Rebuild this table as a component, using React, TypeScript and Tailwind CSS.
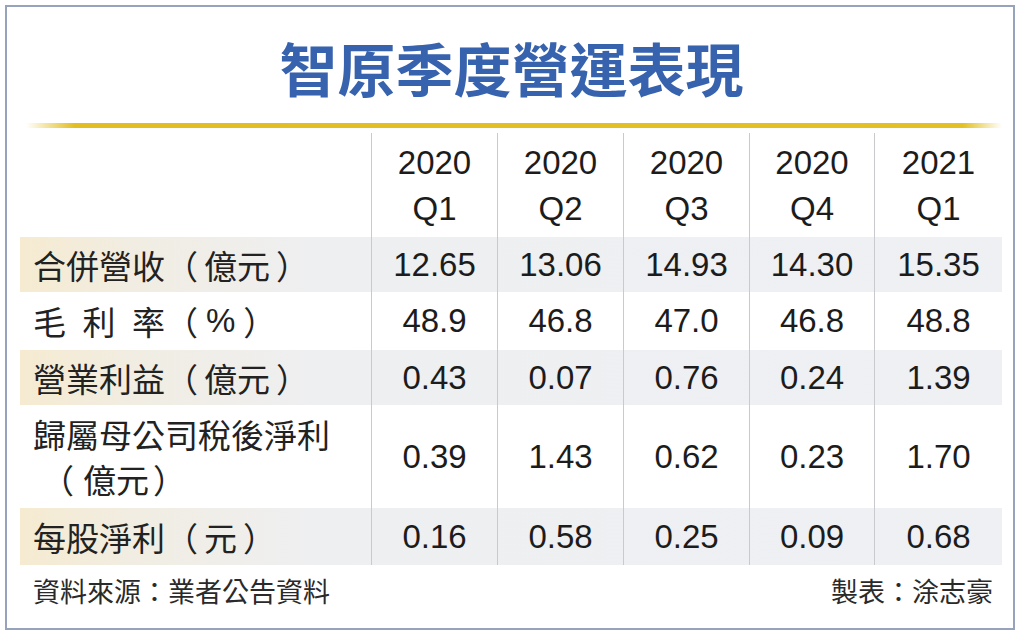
const FONT = "font-['Liberation_Sans','Noto_Sans_CJK_TC',sans-serif]";
const CJK = "font-['Noto_Sans_CJK_TC',sans-serif]";

const quarters = [
  { year: '2020', q: 'Q1' },
  { year: '2020', q: 'Q2' },
  { year: '2020', q: 'Q3' },
  { year: '2020', q: 'Q4' },
  { year: '2021', q: 'Q1' },
];

const rows = [
  { label: '合併營收', unit: '億元', values: ['12.65', '13.06', '14.93', '14.30', '15.35'], shaded: true, height: 'h-[55px]' },
  { label: 'gross', unit: '%', values: ['48.9', '46.8', '47.0', '46.8', '48.8'], shaded: false, height: 'h-[58px]' },
  { label: '營業利益', unit: '億元', values: ['0.43', '0.07', '0.76', '0.24', '1.39'], shaded: true, height: 'h-[55px]' },
  { label: 'net', unit: '億元', values: ['0.39', '1.43', '0.62', '0.23', '1.70'], shaded: false, height: 'h-[103px]' },
  { label: '每股淨利', unit: '元', values: ['0.16', '0.58', '0.25', '0.09', '0.68'], shaded: true, height: 'h-[57px]' },
];

const colWidths = ['w-[127px]', 'w-[126px]', 'w-[126px]', 'w-[125px]', 'w-[127px]'];

// full-width parens kept apart from the unit, as in the printed table
function Unit({ unit, lineStart = false }: { unit: string; lineStart?: boolean }) {
  return (
    <span className="inline-flex items-center">
      <span>（</span>
      <span className={`${lineStart ? 'ml-[9px]' : 'ml-[6px]'} ${unit === '%' ? `${FONT} px-[2px]` : ''}`}>{unit}</span>
      <span className={lineStart ? 'ml-[4px]' : 'ml-[6px]'}>）</span>
    </span>
  );
}

function Label({ kind, unit }: { kind: string; unit: string }) {
  if (kind === 'gross') {
    return (
      <span className="flex items-center">
        <span className="inline-flex w-[132px] justify-between">
          <span>毛</span>
          <span>利</span>
          <span>率</span>
        </span>
        <Unit unit={unit} />
      </span>
    );
  }
  if (kind === 'net') {
    return (
      <span className="flex flex-col leading-[45px]">
        <span>歸屬母公司稅後淨利</span>
        <span className="flex pl-[8px]">
          <Unit unit={unit} lineStart />
        </span>
      </span>
    );
  }
  return (
    <span className="flex items-center">
      <span>{kind}</span>
      <Unit unit={unit} />
    </span>
  );
}

export default function App() {
  return (
    <div className={`w-[1024px] h-[638px] bg-white pt-[5px] pl-[5px] ${FONT}`}>
      <div className="w-[1010px] h-[625px] border-2 border-[#97a3bd] flex flex-col pl-[13px]">
        {/* Title */}
        <h1 className={`mt-[31px] text-center text-[58px] leading-[58px] font-bold text-[#3762ad] pr-[10px] ${CJK}`}>
          智原季度營運表現
        </h1>

        {/* Gold rule */}
        <div className="mt-[27px] ml-[6px] w-[976px] h-[5px] bg-[linear-gradient(to_right,#ffffff_0%,#e2be22_5%,#e3c024_96%,#ffffff_100%)]" />

        {/* Table */}
        <div className="mt-[5px] w-[982px] text-[#1c1c1c]">
          <div className="flex h-[104px]">
            <div className="w-[351px]" />
            {quarters.map((c, i) => (
              <div
                key={i}
                className={`${colWidths[i]} ${i < 4 ? 'border-r' : ''} ${i === 0 ? 'border-l' : ''} border-[#c9cacd] flex flex-col items-center pt-[7px] text-[33px] leading-[46px]`}
              >
                <span>{c.year}</span>
                <span>{c.q}</span>
              </div>
            ))}
          </div>
          {rows.map((r, ri) => (
            <div
              key={ri}
              className={`flex ${r.height} ${
                r.shaded
                  ? 'bg-[linear-gradient(to_right,#f6ebd1_0%,#f1ede3_12%,#eeeff1_30%,#eef0f3_100%)]'
                  : 'bg-white'
              }`}
            >
              <div className={`w-[351px] flex items-center pl-[13px] text-[33px] leading-[40px] text-[#222] ${CJK}`}>
                <Label kind={r.label} unit={r.unit} />
              </div>
              {r.values.map((v, i) => (
                <div
                  key={i}
                  className={`${colWidths[i]} ${i < 4 ? 'border-r' : ''} ${i === 0 ? 'border-l' : ''} border-[#c9cacd] flex items-center justify-center text-[33px]`}
                >
                  {v}
                </div>
              ))}
            </div>
          ))}
        </div>

        {/* Footer */}
        <div className={`mt-[12px] w-[973px] flex justify-between pl-[13px] text-[27px] leading-[27px] text-[#2a2a2a] ${CJK}`}>
          <span>資料來源：業者公告資料</span>
          <span>製表：涂志豪</span>
        </div>
      </div>
    </div>
  );
}
